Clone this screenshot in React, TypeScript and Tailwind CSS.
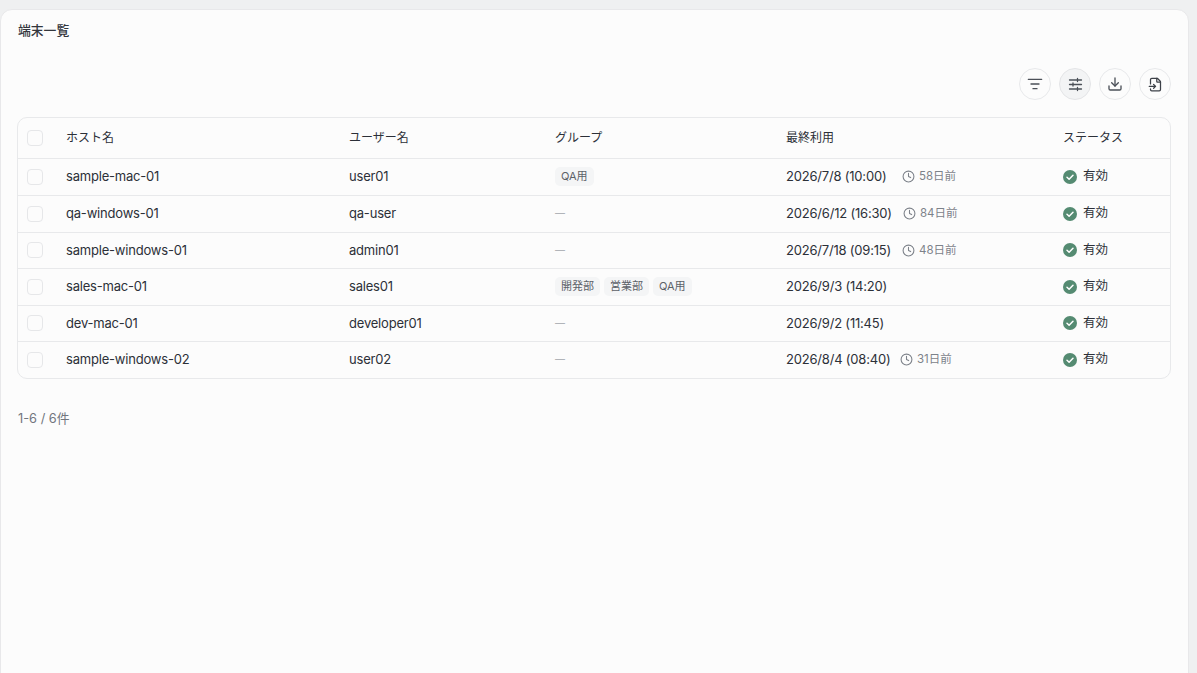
import { Clock, Download, FileInput, ListFilter } from "lucide-react";

const rows = [
  { host: "sample-mac-01", user: "user01", groups: ["QA用"], last: "2026/7/8 (10:00)", ago: "58日前", dateW: "w-[116px]", h: "h-[37px] pb-[1px]" },
  { host: "qa-windows-01", user: "qa-user", groups: [], last: "2026/6/12 (16:30)", ago: "84日前", dateW: "w-[117px]", h: "h-[36.5px]" },
  { host: "sample-windows-01", user: "admin01", groups: [], last: "2026/7/18 (09:15)", ago: "48日前", dateW: "w-[116px]", h: "h-[36.5px]" },
  { host: "sales-mac-01", user: "sales01", groups: ["開発部", "営業部", "QA用"], last: "2026/9/3 (14:20)", ago: "", dateW: "", h: "h-[36.5px]" },
  { host: "dev-mac-01", user: "developer01", groups: [], last: "2026/9/2 (11:45)", ago: "", dateW: "", h: "h-[36.5px]" },
  { host: "sample-windows-02", user: "user02", groups: [], last: "2026/8/4 (08:40)", ago: "31日前", dateW: "w-[114px]", h: "h-[35.5px]" },
];

const Check = () => (
  <div className="w-[16px] h-[16px] rounded-[4px] border border-[#e6e7e9] bg-[#fcfcfc] shrink-0" />
);

const StatusIcon = () => (
  <svg width="14" height="14" viewBox="0 0 14 14" className="shrink-0">
    <circle cx="7" cy="7" r="7" fill="#558b72" />
    <path d="M4 7.2 6.1 9.2 10 5.2" fill="none" stroke="#fff" strokeWidth="1.5" strokeLinecap="round" strokeLinejoin="round" />
  </svg>
);

const Sliders = () => (
  <svg width="15" height="15" viewBox="0 0 15 15" fill="none" stroke="currentColor" strokeWidth="1.3" strokeLinecap="round">
    <path d="M1.5 3h12M1.5 7.5h12M1.5 12h12" />
    <path d="M9.5 1.5v3M5 6v3M9.5 10.5v3" />
  </svg>
);

export default function App() {
  return (
    <div className="w-[1197px] h-[673px] overflow-hidden bg-[#eff0f1] pt-[9px] font-['Inter','Noto_Sans_CJK_JP',sans-serif] text-[13px] tracking-[-0.2px] text-[#2c3038]">
      <div className="w-[1189px] h-[700px] bg-[#fcfcfc] border border-[#e8e8ea] rounded-t-[12px] pl-[16px] pr-[17px]">
        <h1 className="pt-[11px] pl-[1px] h-[44px] text-[12.8px] tracking-normal leading-[20px] font-medium text-[#33363c]">端末一覧</h1>

        <div className="flex justify-end gap-[8px] mt-[14px] h-[32px]">
          <button className="w-[32px] h-[32px] rounded-full border border-[#e8e9eb] flex items-center justify-center text-[#4b5058]">
            <ListFilter size={16} />
          </button>
          <button className="w-[32px] h-[32px] rounded-full border border-[#e4e5e7] bg-[#f3f4f5] flex items-center justify-center text-[#4b5058]">
            <Sliders />
          </button>
          <button className="w-[32px] h-[32px] rounded-full border border-[#e8e9eb] flex items-center justify-center text-[#4b5058]">
            <Download size={16} />
          </button>
          <button className="w-[32px] h-[32px] rounded-full border border-[#e8e9eb] flex items-center justify-center text-[#3d4148]">
            <FileInput size={15} />
          </button>
        </div>

        <div className="mt-[17px] border border-[#e8e9eb] rounded-[10px] overflow-hidden">
          <div className="flex items-center h-[41px] border-b border-[#e8e9eb] text-[12px] tracking-normal">
            <div className="w-[48px] pl-[9px]"><Check /></div>
            <div className="w-[283px]">ホスト名</div>
            <div className="w-[206px]">ユーザー名</div>
            <div className="w-[231px]">グループ</div>
            <div className="w-[277px]">最終利用</div>
            <div>ステータス</div>
          </div>
          {rows.map((r, i) => (
            <div key={r.host} className={`flex items-center ${r.h} ${i < rows.length - 1 ? "border-b border-[#e8e9eb]" : ""}`}>
              <div className="w-[48px] pl-[9px]"><Check /></div>
              <div className="w-[283px]">{r.host}</div>
              <div className="w-[206px]">{r.user}</div>
              <div className="w-[231px] flex items-center gap-[4px] tracking-normal">
                {r.groups.length === 0 && <span className="text-[#a0a4aa] text-[10px]">—</span>}
                {r.groups.map((g) => (
                  <span key={g} className="h-[19px] px-[6px] rounded-[5px] bg-[#f4f5f6] text-[11px] leading-[19px] text-[#5c6168]">{g}</span>
                ))}
              </div>
              <div className="w-[277px] flex items-center">
                <span className={r.dateW}>{r.last}</span>
                {r.ago && (
                  <span className="flex items-center gap-[4px] text-[11.5px] tracking-normal text-[#7d828a]">
                    <Clock size={13} />
                    {r.ago}
                  </span>
                )}
              </div>
              <div className="flex items-center gap-[6px] text-[12.5px] tracking-normal">
                <StatusIcon />
                有効
              </div>
            </div>
          ))}
        </div>

        <p className="mt-[30px] pl-[1px] text-[12.8px] tracking-normal leading-[20px] text-[#71767e]">1-6 / 6件</p>
      </div>
    </div>
  );
}
